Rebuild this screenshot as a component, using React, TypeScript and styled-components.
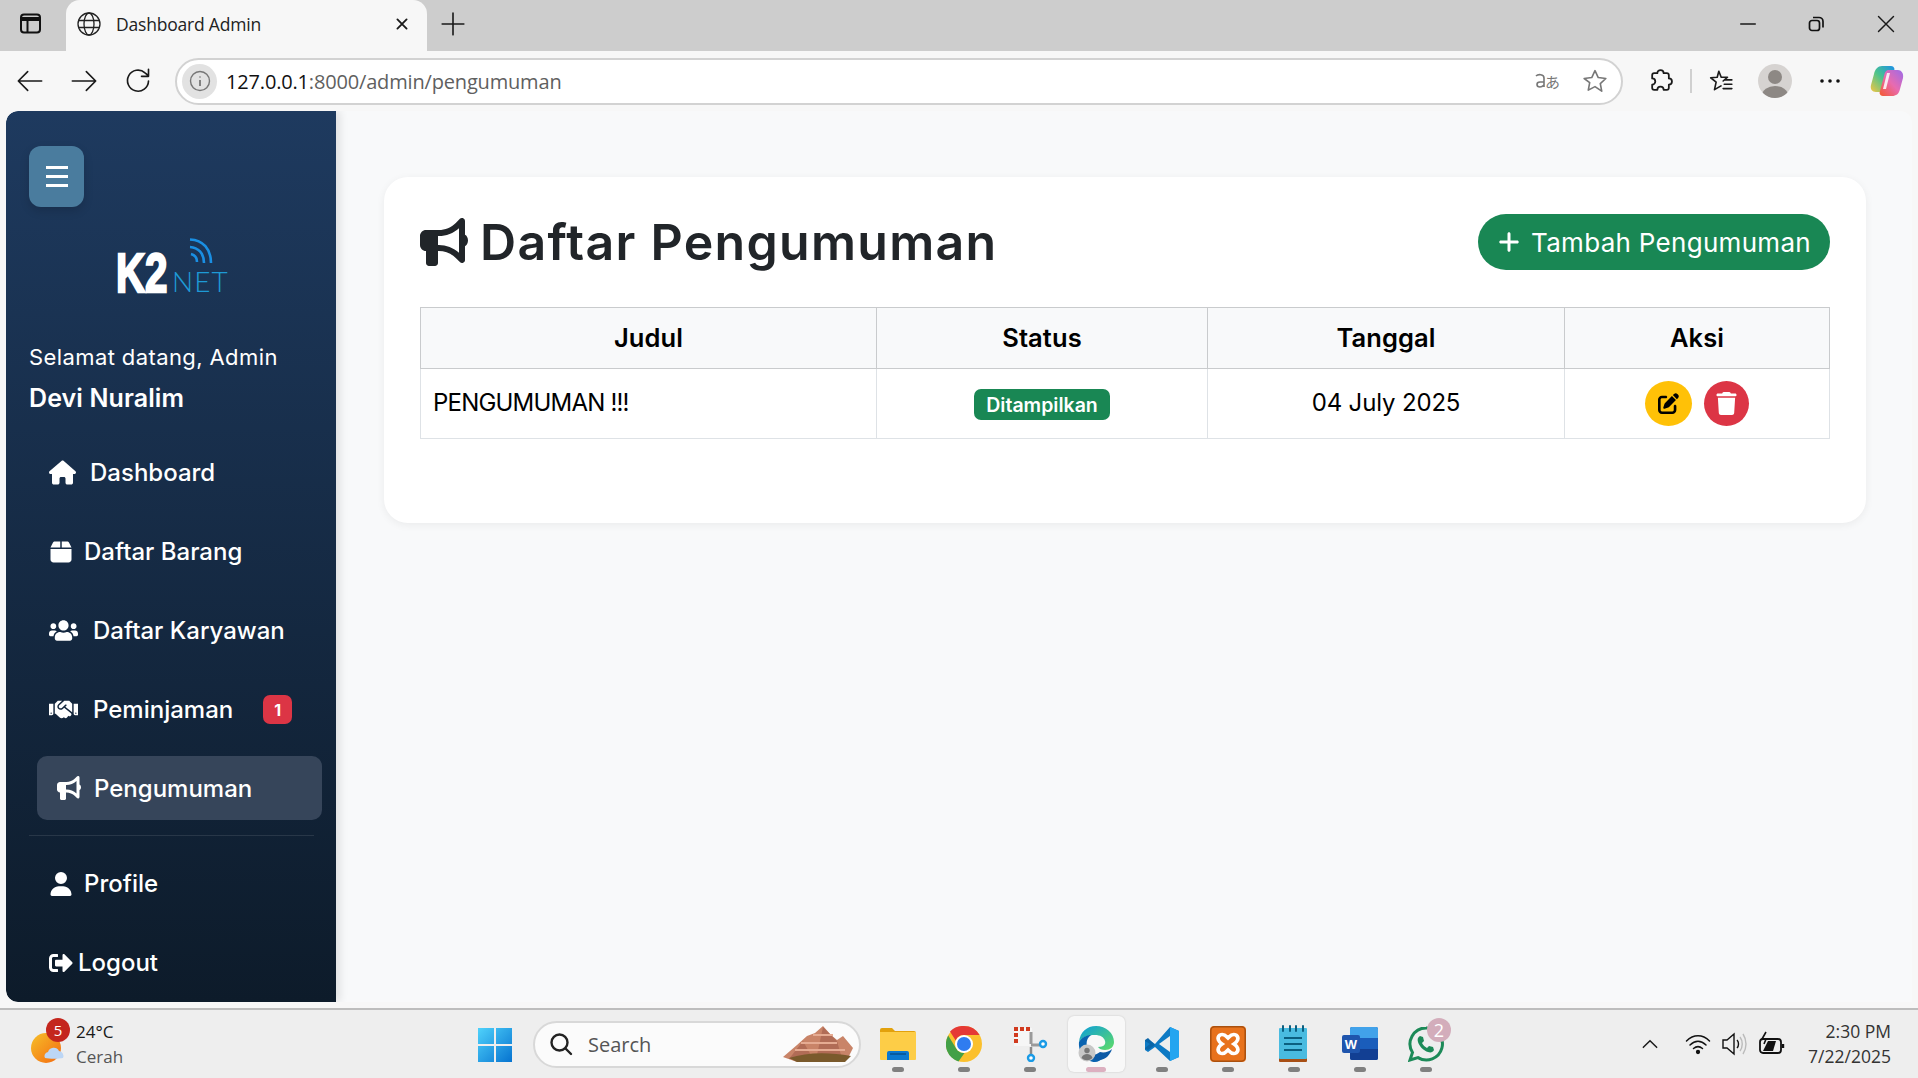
import React from "react"
import styled, { createGlobalStyle } from "styled-components"
import { FaUsers, FaHandshake, FaSignOutAlt } from "react-icons/fa"
import { FaBox, FaBullhorn, FaHouse, FaPenToSquare, FaPlus, FaTrash, FaUser } from "react-icons/fa6"

const UI_FONT = `"Inter", "Liberation Sans", sans-serif`
const SYS_FONT = `"Open Sans", "Noto Sans", sans-serif`

const GlobalStyle = createGlobalStyle`
  html, body { margin: 0; padding: 0; height: 100%; overflow: hidden; }
  body { font-family: ${ UI_FONT }; background: #f7f7f7; }
  * { box-sizing: border-box; }
`

const Screen = styled.div`
  width: 1918px;
  height: 1078px;
  display: flex;
  flex-direction: column;
  background: #f7f7f7;
`

//----------------------------------------------------------
//-- Browser chrome
//----------------------------------------------------------
const TabStrip = styled.div`
  height: 51px;
  flex: none;
  display: flex;
  align-items: center;
  background: #cdcdcd;
`
const SideTabsBtn = styled.div`
  width: 66px;
  display: flex;
  justify-content: center;
  padding: 0 6px 4px 0;
`
const Tab = styled.div`
  width: 361px;
  height: 51px;
  display: flex;
  align-items: center;
  padding: 0 14px 4px 11px;
  background: #f7f7f7;
  border-radius: 14px 14px 0 0;
`
const TabTitle = styled.div`
  flex: 1;
  margin-left: 15px;
  font: 400 17.5px ${ SYS_FONT };
  letter-spacing: -0.2px;
  color: #222;
`
const NewTab = styled.div`
  margin-left: 13px;
  padding-bottom: 4px;
  display: flex;
`
const WindowControls = styled.div`
  margin-left: auto;
  display: flex;
  align-items: center;
  gap: 52px;
  padding: 0 22px 4px 0;
`
const CloseBtn = styled.div`
  display: flex;
`
const Toolbar = styled.div`
  height: 60px;
  flex: none;
  display: flex;
  align-items: center;
  padding-left: 16px;
  background: #f7f7f7;
`
const NavButtons = styled.div`
  flex: none;
  display: flex;
  align-items: center;
  gap: 26px;
  width: 159px;
`
const AddressPill = styled.div`
  flex: none;
  width: 1448px;
  height: 47px;
  display: flex;
  align-items: center;
  padding: 0 13px 0 5px;
  background: #fff;
  border: 2px solid #d2d2d2;
  border-radius: 24px;
`
const InfoBadge = styled.div`
  width: 35px;
  height: 35px;
  display: flex;
  align-items: center;
  justify-content: center;
  border-radius: 50%;
  background: #e2e2e2;
`
const Url = styled.div`
  flex: 1;
  margin-left: 9px;
  font: 400 20px ${ SYS_FONT };
  letter-spacing: -0.17px;
  color: #5f5f5f;
  b { font-weight: 400; color: #111; }
`
const PillTail = styled.div`
  display: flex;
  align-items: center;
  gap: 22px;
`
const ToolIcons = styled.div`
  flex: none;
  margin-left: 25px;
  display: flex;
  align-items: center;
`
const ToolSep = styled.div`
  width: 2px;
  height: 24px;
  margin: 0 16px 0 17px;
  background: #d0d0d0;
`
const Avatar = styled.div`
  width: 34px;
  height: 34px;
  margin: 0 28px 0 24px;
  border-radius: 50%;
  background: #d6d3d1;
  display: flex;
  overflow: hidden;
`
const CopilotWrap = styled.div`
  margin-left: 30px;
  display: flex;
`

//----------------------------------------------------------
//-- Page body
//----------------------------------------------------------
const Body = styled.div`
  height: 891px;
  flex: none;
  margin: 0 6px;
  display: flex;
  background: #f8f9fa;
  border-radius: 12px 12px 0 12px;
  overflow: hidden;
`
const Sidebar = styled.aside`
  width: 330px;
  flex: none;
  display: flex;
  flex-direction: column;
  padding: 35px 0 0 23px;
  color: #fff;
  background: linear-gradient(180deg, #1e3a5f 0%, #0d1b2a 100%);
  box-shadow: 4px 0 8px rgba(0, 0, 0, 0.1);
  border-radius: 12px 0 0 12px;
  & > * { flex: none; }
`
const Hamburger = styled.div`
  width: 55px;
  height: 61px;
  display: flex;
  flex-direction: column;
  align-items: center;
  justify-content: center;
  gap: 6px;
  border-radius: 12px;
  background: #4a7c9e;
  box-shadow: 0 4px 10px rgba(0, 0, 0, 0.15);
  span { width: 22px; height: 3px; background: #fff; }
`
const LogoWrap = styled.div`
  margin: 31px 0 0 87px;
  height: 56px;
  display: flex;
  align-items: flex-start;
`
const Greeting = styled.div`
  margin-top: 49px;
  font-size: 22px;
  line-height: 28px;
  letter-spacing: 0.4px;
`
const UserName = styled.div`
  margin-top: 13px;
  font-size: 25px;
  line-height: 28px;
  font-weight: 600;
  letter-spacing: 0.1px;
`
const NavList = styled.nav<{ $top?: number }>`
  margin-top: ${ (p) => p.$top ?? 0 }px;
  margin-left: 8px;
  width: 285px;
  display: flex;
  flex-direction: column;
`
const NavItem = styled.div<{ $active?: boolean; $gap: number }>`
  height: ${ (p) => (p.$active ? "64px" : "79px") };
  margin: ${ (p) => (p.$active ? "7px 0 0 0" : "0") };
  display: flex;
  align-items: center;
  gap: ${ (p) => p.$gap }px;
  padding-left: ${ (p) => (p.$active ? "20px" : "12px") };
  font-size: 24px;
  font-weight: 500;
  border-radius: 10px;
  background: ${ (p) => (p.$active ? "#36455a" : "transparent") };
  svg { flex: none; }
`
const CountBadge = styled.span`
  width: 29px;
  height: 29px;
  margin-left: 15px;
  display: flex;
  align-items: center;
  justify-content: center;
  font-size: 16px;
  font-weight: 700;
  border-radius: 7px;
  background: #dc3545;
`
const NavDivider = styled.div`
  width: 285px;
  height: 1px;
  margin: 15px 0 8px 0;
  background: rgba(255, 255, 255, 0.1);
`

const Main = styled.main`
  flex: 1;
  padding: 66px 47px 0 48px;
`
const Card = styled.section`
  height: 346px;
  padding: 37px 36px 0;
  background: #fff;
  border-radius: 24px;
  box-shadow: 0 2px 8px rgba(0, 0, 0, 0.06);
`
const CardHead = styled.div`
  height: 56px;
  display: flex;
  align-items: center;
  justify-content: space-between;
`
const Title = styled.h2`
  margin: 0;
  display: flex;
  align-items: center;
  gap: 12px;
  font-size: 50px;
  font-weight: 600;
  letter-spacing: 1.3px;
  color: #212529;
`
const AddButton = styled.div`
  width: 352px;
  height: 56px;
  display: flex;
  align-items: center;
  gap: 10px;
  padding-left: 19px;
  font-size: 26px;
  letter-spacing: 0.3px;
  color: #fff;
  border-radius: 28px;
  background: #198754;
`
const Table = styled.table`
  width: 1409px;
  margin-top: 37px;
  table-layout: fixed;
  border-collapse: collapse;
  color: #000;
`
const Th = styled.th<{ $w: number }>`
  width: ${ (p) => p.$w }px;
  height: 61px;
  padding: 0 0 2px;
  font-size: 25.5px;
  font-weight: 600;
  letter-spacing: 0.1px;
  background: #f8f9fa;
  border: 1.5px solid #c9cbcd;
`
const Td = styled.td<{ $center?: boolean }>`
  height: 70px;
  padding: 0 12px 3px;
  font-size: 24px;
  letter-spacing: -0.15px;
  text-align: ${ (p) => (p.$center ? "center" : "left") };
  border: 1.5px solid #dee2e6;
`
const NoticeTitle = styled.span`
  letter-spacing: -0.8px;
`
const StatusBadge = styled.span`
  display: inline-flex;
  align-items: center;
  justify-content: center;
  width: 136px;
  height: 31px;
  margin-top: 5px;
  font-size: 19.5px;
  font-weight: 600;
  letter-spacing: 0;
  color: #fff;
  border-radius: 7px;
  background: #198754;
`
const ActionRow = styled.div`
  display: flex;
  justify-content: center;
  gap: 12px;
  padding-top: 3px;
`
const RoundBtn = styled.div<{ $bg: string; $fg: string; $w: number }>`
  width: ${ (p) => p.$w }px;
  height: 45px;
  display: flex;
  align-items: center;
  justify-content: center;
  border-radius: 50%;
  color: ${ (p) => p.$fg };
  background: ${ (p) => p.$bg };
`

//----------------------------------------------------------
//-- Taskbar
//----------------------------------------------------------
const Taskbar = styled.footer`
  height: 70px;
  flex: none;
  margin-top: 6px;
  display: flex;
  align-items: center;
  border-top: 2px solid #bdbdbd;
  background: #eeeeee;
  font-family: ${ SYS_FONT };
`
const Weather = styled.div`
  width: 477px;
  display: flex;
  align-items: center;
  padding-left: 31px;
`
const WeatherIcon = styled.div`
  position: relative;
  width: 45px;
  height: 40px;
  display: flex;
  align-items: flex-end;
`
const NotifyDot = styled.span<{ $bg: string }>`
  position: absolute;
  width: 24px;
  height: 24px;
  display: flex;
  align-items: center;
  justify-content: center;
  font-size: 15px;
  color: #fff;
  border-radius: 50%;
  background: ${ (p) => p.$bg };
`
const WeatherDot = styled(NotifyDot)`
  top: -6px;
  left: 15px;
`
const WeatherText = styled.div`
  font-size: 17px;
  line-height: 25px;
  color: #1a1a1a;
  span { display: block; color: #555; }
`
const SearchPill = styled.div`
  width: 328px;
  height: 47px;
  margin-left: 20px;
  display: flex;
  align-items: center;
  padding-left: 14px;
  gap: 15px;
  border: 2px solid #d8d8d8;
  border-radius: 24px;
  background: #fbfbfb;
  font-size: 20px;
  color: #555;
  overflow: hidden;
`
const SearchArt = styled.div`
  margin-left: auto;
  margin-right: 2px;
  display: flex;
`
const Apps = styled.div`
  margin-left: 4px;
  display: flex;
  align-items: center;
`
const AppSlot = styled.div<{ $active?: boolean }>`
  position: relative;
  width: ${ (p) => (p.$active ? "57px" : "66px") };
  height: 56px;
  margin: ${ (p) => (p.$active ? "0 4.5px" : "0") };
  display: flex;
  align-items: center;
  justify-content: center;
  border-radius: 6px;
  background: ${ (p) => (p.$active ? "#f8f8f8" : "transparent") };
  box-shadow: ${ (p) => (p.$active ? "0 0 2px rgba(0,0,0,0.18)" : "none") };
  &::after {
    content: "";
    position: absolute;
    bottom: 0;
    left: 50%;
    width: ${ (p) => (p.$active ? "20px" : "12px") };
    height: 5px;
    margin-left: ${ (p) => (p.$active ? "-10px" : "-6px") };
    border-radius: 3px;
    background: ${ (p) => (p.$active ? "#dcb0c0" : "#808080") };
  }
`
const AppDot = styled(NotifyDot)`
  top: 2px;
  right: 8px;
  font-size: 18px;
`
const Tray = styled.div`
  margin-left: auto;
  display: flex;
  align-items: center;
  padding-right: 27px;
`
const TrayIcons = styled.div`
  display: flex;
  align-items: center;
  gap: 11px;
  margin-right: 23px;
`
const TrayChevron = styled.div`
  display: flex;
  margin-right: 25px;
`
const Clock = styled.div`
  font-size: 17.5px;
  line-height: 25px;
  text-align: right;
  color: #333;
`

//----------------------------------------------------------
//-- Drawn icons
//----------------------------------------------------------
const Line: React.FC<{ s?: number; c?: string; w?: number; d: string }> = ({ s = 24, c = "#1a1a1a", w = 1.8, d }) => (
  <svg width={ s } height={ s } viewBox="0 0 24 24" fill="none" stroke={ c } strokeWidth={ w } strokeLinecap="round" strokeLinejoin="round">
    <path d={ d } />
  </svg>
)

const Logo = () => (
  <svg width="116" height="70" viewBox="0 0 116 70">
    <text transform="translate(0 54) scale(0.72 1)" fontFamily="Liberation Sans" fontWeight="700" fontSize="56" fill="#fff" stroke="#fff" strokeWidth="2.4">K2</text>
    <text x="56" y="54" fontFamily="Lato" fontWeight="300" fontSize="28" fill="#1e9ad6" letterSpacing="1">NET</text>
    <g fill="none" stroke="#1a8fe3" strokeWidth="2.6">
      <path d="M74 1.5 C 87 2, 95 11, 95 25" />
      <path d="M74 9 C 82 9.5, 88 15, 88 25" />
      <path d="M75 16 C 79 17, 81 20, 81 24" />
    </g>
  </svg>
)

const Copilot = () => (
  <svg width="34" height="32" viewBox="0 0 34 32">
    <defs>
      <linearGradient id="cpA" x1="0" y1="1" x2="1" y2="0">
        <stop offset="0" stopColor="#f5c542" />
        <stop offset="0.5" stopColor="#4bc48d" />
        <stop offset="1" stopColor="#1b8fe8" />
      </linearGradient>
      <linearGradient id="cpB" x1="0" y1="1" x2="1" y2="0">
        <stop offset="0" stopColor="#f4582e" />
        <stop offset="0.5" stopColor="#e86bb0" />
        <stop offset="1" stopColor="#9c6be8" />
      </linearGradient>
    </defs>
    <path d="M12 1h9c2 0 3 1 3.5 3L19 24c-.6 2-2 3-4 3H6C2 27 0 24 1 20l3-11c1-5 4-8 8-8z" fill="url(#cpA)" />
    <path d="M22 5h6c3 0 6 3 5 8l-3 11c-1 5-4 7-8 7h-9c-2 0-3-1-3.500-3l5-19c.6-2 2-4 4-4z" fill="url(#cpB)" />
    <path d="M17 8h3l-4 16h-3z" fill="#fff" opacity="0.85" />
  </svg>
)

const WinLogo = () => (
  <svg width="36" height="36" viewBox="0 0 36 36">
    <defs>
      <linearGradient id="win" x1="0" y1="0" x2="1" y2="1">
        <stop offset="0" stopColor="#4fd2fb" />
        <stop offset="1" stopColor="#0673d0" />
      </linearGradient>
    </defs>
    <path d="M1 2h16v16H1zM19 2h16v16H19zM1 20h16v16H1zM19 20h16v16H19z" fill="url(#win)" />
  </svg>
)

const Mountains = () => (
  <svg width="74" height="38" viewBox="0 0 74 38">
    <path d="M0 32L14 20 24 11l8-3 8-7 8 9 6 5 6-4 10 12-4 8-12 6H14z" fill="#c98468" />
    <path d="M20 16l10 18H6zM40 2l14 14 4 14H34z" fill="#a86450" opacity="0.75" />
    <path d="M12 25h50M18 18h36M30 10h20" stroke="#e5ab92" strokeWidth="2" />
    <path d="M6 33c18-6 40-6 62-2l-6 6H14z" fill="#7a5a2c" />
  </svg>
)

const IconFolder = () => (
  <svg width="36" height="34" viewBox="0 0 36 34">
    <path d="M0 3a2 2 0 0 1 2-2h10l3 3h19a2 2 0 0 1 2 2v4H0z" fill="#e2a10c" />
    <path d="M0 5h36v27a1 1 0 0 1-1 1H1a1 1 0 0 1-1-1z" fill="#fdcd47" />
    <path d="M7 33v-7a2 2 0 0 1 2-2h18a2 2 0 0 1 2 2v7z" fill="#0a78d0" />
    <path d="M10 27h16" stroke="#07508f" strokeWidth="1.5" />
  </svg>
)
const IconChrome = () => (
  <svg width="36" height="36" viewBox="0 0 36 36">
    <circle cx="18" cy="18" r="18" fill="#fbc02d" />
    <path d="M18 0a18 18 0 0 1 15.600 9H18a9 9 0 0 0-8.300 5.500L4 5.500A18 18 0 0 1 18 0z" fill="#e53935" />
    <path d="M2.200 9.500L10.500 23a9 9 0 0 0 8 4l-6 8.500A18 18 0 0 1 2.200 9.500z" fill="#43a047" />
    <circle cx="18" cy="18" r="9" fill="#fff" />
    <circle cx="18" cy="18" r="7" fill="#2f7cf0" />
  </svg>
)
const IconSnip = () => (
  <svg width="36" height="36" viewBox="0 0 36 36">
    <path d="M2 2h18v18H2z" fill="#f6f6f6" />
    <path d="M2 1h4v4H2zM8 1h4v4H8zM14 1h4v4h-4zM2 7h4v4H2zM2 13h4v4H2z" fill="#d13a1e" />
    <path d="M19 6v12M19 19l10 0" stroke="#9a9a9a" strokeWidth="3" />
    <path d="M19 21v7" stroke="#8a8a8a" strokeWidth="2.500" />
    <circle cx="31" cy="18" r="3" fill="#fff" stroke="#1a9be6" strokeWidth="2.400" />
    <circle cx="19" cy="32" r="3" fill="#fff" stroke="#1a9be6" strokeWidth="2.400" />
  </svg>
)
const IconEdge = () => (
  <svg width="36" height="36" viewBox="0 0 36 36">
    <defs>
      <linearGradient id="edgeG" x1="0" y1="0" x2="1" y2="1">
        <stop offset="0" stopColor="#0c9ddb" />
        <stop offset="1" stopColor="#5fdc66" />
      </linearGradient>
    </defs>
    <path d="M1 16C2 6 9 0 18 0c10 0 18 7 18 16 0 5-4 8-9 8-3 0-6-1-7-3 6 0 8-3 7-6-1-4-5-6-10-6C10 9 4 11 1 16z" fill="url(#edgeG)" />
    <path d="M1 16c3-5 8-7 12-7-4 3-5 7-4 12 1 7 7 12 16 11-2 2-5 4-8 4C8 36 0 27 1 16z" fill="#0a63b0" />
    <path d="M22 26c4 1 9 0 12-3-2 6-6 10-12 11-5 1-9-2-12-6 4 2 8 1 12-2z" fill="#0c5aa6" />
    <circle cx="9" cy="27" r="8.500" fill="#c8c8c8" />
    <circle cx="9" cy="24.500" r="2.700" fill="#777" />
    <path d="M3.500 32c1-3 3-4 5.500-4s4.500 1 5.500 4a8 8 0 0 1-11 0z" fill="#777" />
  </svg>
)
const IconVsCode = () => (
  <svg width="36" height="36" viewBox="0 0 36 36">
    <path d="M26 1l9 4v26l-9 4-15-14-7 5-3-2v-9l3-2 7 5z" fill="#0e7ac4" />
    <path d="M26 1l9 4v26l-9 4z" fill="#23a5f0" />
    <path d="M26 10L15 18l11 8z" fill="#eeeeee" />
    <path d="M4 12l-3 2 0 1 5 3-5 4v1l3 1 7-5z" fill="#0a65a8" />
  </svg>
)
const IconXampp = () => (
  <svg width="36" height="36" viewBox="0 0 36 36">
    <rect width="36" height="36" rx="4" fill="#e8721c" />
    <rect x="0.800" y="0.800" width="34.400" height="34.400" rx="4" fill="none" stroke="#a9500f" strokeWidth="1.500" />
    <path d="M10 9c4-2 6 1 8 3 2-2 4-5 8-3 4 3 1 7-2 9 3 2 6 6 2 9-4 2-6-1-8-3-2 2-4 5-8 3-4-3-1-7 2-9-3-2-6-6-2-9z" fill="none" stroke="#fff" strokeWidth="3.600" />
  </svg>
)
const IconNotepad = () => (
  <svg width="30" height="38" viewBox="0 0 30 38">
    <rect x="0" y="32" width="28" height="5" rx="1" fill="#a84f15" />
    <rect x="0" y="3" width="28" height="31" rx="1" fill="#49bbe0" />
    <path d="M5 13h18M5 19h18M5 25h18" stroke="#0b5f80" strokeWidth="2" />
    <path d="M4 1v5M11 1v5M17 1v5M24 1v5" stroke="#0b5f80" strokeWidth="2" strokeLinecap="round" />
  </svg>
)
const IconWord = () => (
  <svg width="36" height="34" viewBox="0 0 36 34">
    <rect x="8" y="0" width="28" height="33" rx="2" fill="#1a5dbb" />
    <path d="M10 0h24a2 2 0 0 1 2 2v9H8V2a2 2 0 0 1 2-2z" fill="#41a2ea" />
    <path d="M8 22h28v9a2 2 0 0 1-2 2H10a2 2 0 0 1-2-2z" fill="#123f93" />
    <rect x="0" y="8" width="18" height="18" rx="2" fill="#1f55ad" />
    <text x="9" y="22" textAnchor="middle" fontFamily="Liberation Sans" fontWeight="700" fontSize="13" fill="#fff">W</text>
  </svg>
)
const IconWhatsapp = () => (
  <svg width="36" height="36" viewBox="0 0 36 36">
    <path d="M18 2a16 16 0 0 0-13.500 24.500L2 34l8-2.400A16 16 0 1 0 18 2z" fill="#eeeeee" stroke="#1c8a58" strokeWidth="3" />
    <path d="M12 10c-2 1-3 3-2 6 1 4 6 9 10 10 3 1 5 0 6-2l-1-3-4-1-2 2c-2-1-4-3-5-5l2-2-1-4z" fill="#1c8a58" />
  </svg>
)

const apps: { el: React.ReactNode; active?: boolean; count?: string }[] = [
  { el: <IconFolder /> },
  { el: <IconChrome /> },
  { el: <IconSnip /> },
  { el: <IconEdge />, active: true },
  { el: <IconVsCode /> },
  { el: <IconXampp /> },
  { el: <IconNotepad /> },
  { el: <IconWord /> },
  { el: <IconWhatsapp />, count: "2" },
]

//----------------------------------------------------------
//-- Render
//----------------------------------------------------------
export default function App()
{
  return (
    <Screen>
      <GlobalStyle />
      <TabStrip>
        <SideTabsBtn>
          <svg width="21" height="21" viewBox="0 0 21 21" fill="none" stroke="#111" strokeWidth="2">
            <rect x="1" y="1.500" width="19" height="18" rx="3" />
            <path d="M1 6h19" strokeWidth="4" />
            <path d="M7.500 6v13" />
          </svg>
        </SideTabsBtn>
        <Tab>
          <svg width="24" height="24" viewBox="0 0 24 24" fill="none" stroke="#222" strokeWidth="1.300">
            <circle cx="12" cy="12" r="11" />
            <ellipse cx="12" cy="12" rx="5" ry="11" />
            <path d="M1.500 8.500h21M1.500 15.500h21" />
          </svg>
          <TabTitle>Dashboard Admin</TabTitle>
          <Line s={ 22 } w={ 2 } d="M7 7l10 10M17 7L7 17" />
        </Tab>
        <NewTab>
          <Line s={ 26 } w={ 1.500 } d="M12 2v20M2 12h20" />
        </NewTab>
        <WindowControls>
          <Line s={ 16 } w={ 2 } d="M1 12h22" />
          <svg width="16" height="16" viewBox="0 0 16 16" fill="none" stroke="#111" strokeWidth="1.700">
            <rect x="1.500" y="4.500" width="10" height="10" rx="2.500" />
            <path d="M5 1.500h6a4 4 0 0 1 4 4v6" />
          </svg>
          <CloseBtn><Line s={ 20 } w={ 1.700 } d="M3 3l18 18M21 3L3 21" /></CloseBtn>
        </WindowControls>
      </TabStrip>

      <Toolbar>
        <NavButtons>
          <Line s={ 28 } w={ 1.400 } d="M22 12H2M10 4l-8 8 8 8" />
          <Line s={ 28 } w={ 1.400 } d="M2 12h20M14 4l8 8-8 8" />
          <Line s={ 28 } w={ 1.400 } d="M21 12a9 9 0 1 1-3-7l3 2.500M21 2v6h-6" />
        </NavButtons>
        <AddressPill>
          <InfoBadge>
            <svg width="22" height="22" viewBox="0 0 22 22" fill="none" stroke="#777" strokeWidth="1.400">
              <circle cx="11" cy="11" r="9.500" />
              <path d="M11 10v6M11 6.500v1" strokeWidth="1.800" />
            </svg>
          </InfoBadge>
          <Url><b>127.0.0.1</b>:8000/admin/pengumuman</Url>
          <PillTail>
            <svg width="26" height="22" viewBox="0 0 26 22">
              <path d="M2 6c2-2 8-2 8 2v9M10 12H6c-4 0-4 5 0 5 2 0 3-1 4-2" fill="none" stroke="#777" strokeWidth="1.600" />
              <text x="11" y="18" fontFamily="Noto Sans CJK JP" fontSize="15" fill="#777">あ</text>
            </svg>
            <Line s={ 26 } c="#777" w={ 1.500 } d="M12 2.500l3 6.300 7 .9-5.100 4.800 1.300 6.900L12 17.200l-6.200 3.200 1.300-6.900L2 9.700l7-.9z" />
          </PillTail>
        </AddressPill>
        <ToolIcons>
          <Line s={ 25 } w={ 1.700 } d="M9 4a3 3 0 0 1 6 0h3a2 2 0 0 1 2 2v3a3 3 0 0 1 0 6v3a2 2 0 0 1-2 2h-3a3 3 0 0 0-6 0H6a2 2 0 0 1-2-2v-3a3 3 0 0 0 0-6V6a2 2 0 0 1 2-2z" />
          <ToolSep />
          <Line s={ 26 } w={ 1.500 } d="M10 3l2.200 5.500H18l-4 3.500M6 20l1.500-7L2.500 9l6-.5L10 3M6 20l6-3.500M16 11h6M15 15h7M14 19h8" />
          <Avatar>
            <svg width="34" height="34" viewBox="0 0 34 34" fill="#8d8884">
              <circle cx="17" cy="13" r="7" />
              <ellipse cx="17" cy="31" rx="13" ry="9" />
            </svg>
          </Avatar>
          <svg width="20" height="4" viewBox="0 0 20 4" fill="#111">
            <circle cx="2" cy="2" r="1.800" /><circle cx="10" cy="2" r="1.800" /><circle cx="18" cy="2" r="1.800" />
          </svg>
          <CopilotWrap><Copilot /></CopilotWrap>
        </ToolIcons>
      </Toolbar>

      <Body>
        <Sidebar>
          <Hamburger><span /><span /><span /></Hamburger>
          <LogoWrap><Logo /></LogoWrap>
          <Greeting>Selamat datang, Admin</Greeting>
          <UserName>Devi Nuralim</UserName>
          <NavList $top={ 21 }>
            <NavItem $gap={ 14 }><FaHouse size={ 27 } />Dashboard</NavItem>
            <NavItem $gap={ 11 }><FaBox size={ 24 } />Daftar Barang</NavItem>
            <NavItem $gap={ 15 }><FaUsers size={ 29 } />Daftar Karyawan</NavItem>
            <NavItem $gap={ 15 }><FaHandshake size={ 29 } />Peminjaman<CountBadge>1</CountBadge></NavItem>
            <NavItem $active $gap={ 13 }><FaBullhorn size={ 24 } />Pengumuman</NavItem>
          </NavList>
          <NavDivider />
          <NavList>
            <NavItem $gap={ 11 }><FaUser size={ 24 } />Profile</NavItem>
            <NavItem $gap={ 5 }><FaSignOutAlt size={ 24 } />Logout</NavItem>
          </NavList>
        </Sidebar>
        <Main>
          <Card>
            <CardHead>
              <Title><FaBullhorn size={ 48 } />Daftar Pengumuman</Title>
              <AddButton><FaPlus size={ 24 } />Tambah Pengumuman</AddButton>
            </CardHead>
            <Table>
              <thead>
                <tr>
                  <Th $w={ 456 }>Judul</Th>
                  <Th $w={ 331 }>Status</Th>
                  <Th $w={ 357 }>Tanggal</Th>
                  <Th $w={ 265 }>Aksi</Th>
                </tr>
              </thead>
              <tbody>
                <tr>
                  <Td><NoticeTitle>PENGUMUMAN !!!</NoticeTitle></Td>
                  <Td $center><StatusBadge>Ditampilkan</StatusBadge></Td>
                  <Td $center>04 July 2025</Td>
                  <Td $center>
                    <ActionRow>
                      <RoundBtn $w={ 47 } $bg="#ffc107" $fg="#000"><FaPenToSquare size={ 21 } /></RoundBtn>
                      <RoundBtn $w={ 45 } $bg="#dc3545" $fg="#fff"><FaTrash size={ 23 } /></RoundBtn>
                    </ActionRow>
                  </Td>
                </tr>
              </tbody>
            </Table>
          </Card>
        </Main>
      </Body>

      <Taskbar>
        <Weather>
          <WeatherIcon>
            <svg width="36" height="32" viewBox="0 0 36 32">
              <defs>
                <linearGradient id="sun" x1="0" y1="0" x2="1" y2="1">
                  <stop offset="0" stopColor="#f6c02a" />
                  <stop offset="1" stopColor="#f4690f" />
                </linearGradient>
              </defs>
              <circle cx="15" cy="16" r="15" fill="url(#sun)" />
              <path d="M14 26a4 4 0 0 1 3-6 6 6 0 0 1 11-1 5 5 0 0 1 4 7c-4 1-14 1-18 0z" fill="#bcd6f5" />
            </svg>
            <WeatherDot $bg="#c4261d">5</WeatherDot>
          </WeatherIcon>
          <WeatherText>24°C<span>Cerah</span></WeatherText>
        </Weather>
        <WinLogo />
        <SearchPill>
          <svg width="24" height="24" viewBox="0 0 24 24" fill="none" stroke="#222" strokeWidth="2.400" strokeLinecap="round">
            <circle cx="10.500" cy="10.500" r="8" />
            <path d="M16.500 16.500L22 22" />
          </svg>
          Search
          <SearchArt><Mountains /></SearchArt>
        </SearchPill>
        <Apps>
          { apps.map((a, i) => (
            <AppSlot key={ i } $active={ a.active }>
              { a.el }
              { a.count && <AppDot $bg="#d3adbb">{ a.count }</AppDot> }
            </AppSlot>
          )) }
        </Apps>
        <Tray>
          <TrayChevron><Line s={ 20 } w={ 1.800 } d="M4 16l8-8 8 8" /></TrayChevron>
          <TrayIcons>
            <svg width="26" height="22" viewBox="0 0 26 22" fill="none" stroke="#111" strokeWidth="1.500" strokeLinecap="round">
              <path d="M1.500 8c7-7 16-7 23 0M5 12c5-5 11-5 16 0M8.500 15.500c3-2.500 6-2.500 9 0" />
              <circle cx="13" cy="19" r="1.400" fill="#111" />
            </svg>
            <svg width="26" height="24" viewBox="0 0 26 24" fill="none" stroke="#111" strokeWidth="1.400">
              <path d="M1 8h4l7-6v20l-7-6H1z" />
              <path d="M15 8c2 2 2 6 0 8" />
              <path d="M18 5c3 4 3 10 0 14M21 2c4 6 4 14 0 20" stroke="#bbb" />
            </svg>
            <svg width="26" height="26" viewBox="0 0 26 26" fill="none" stroke="#111" strokeWidth="1.800">
              <rect x="1" y="8" width="21" height="14" rx="3" />
              <path d="M24 13v4" strokeWidth="2.400" />
              <path d="M4 20h10l3-10h-8z" fill="#111" stroke="none" />
              <path d="M7 1L3 8h4l-2 5" strokeWidth="1.600" />
            </svg>
          </TrayIcons>
          <Clock>2:30 PM<br />7/22/2025</Clock>
        </Tray>
      </Taskbar>
    </Screen>
  )
}
